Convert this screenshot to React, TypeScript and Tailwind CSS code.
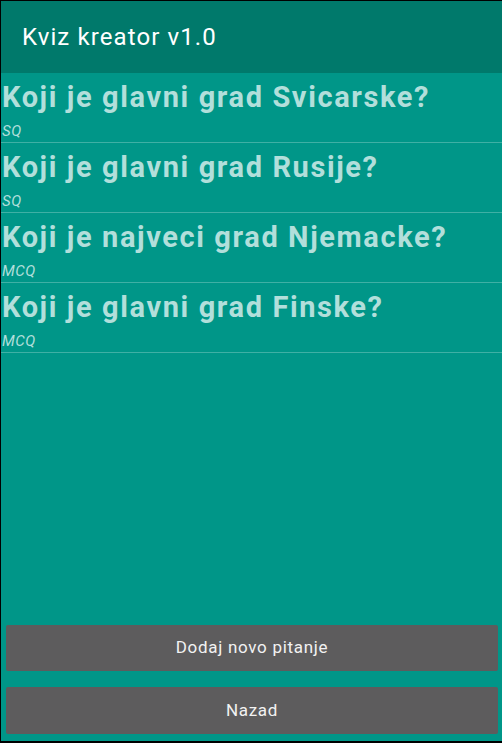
const questions = [
  { title: "Koji je glavni grad Svicarske?", type: "SQ" },
  { title: "Koji je glavni grad Rusije?", type: "SQ" },
  { title: "Koji je najveci grad Njemacke?", type: "MCQ" },
  { title: "Koji je glavni grad Finske?", type: "MCQ" },
];

export default function App() {
  return (
    <div
      className="flex h-[743px] w-[502px] flex-col border-t border-b-2 border-l border-black bg-[#009688]"
      style={{ fontFamily: "Roboto, 'Noto Sans', sans-serif" }}
    >
      <div className="flex h-[72px] shrink-0 items-center bg-[#00796b] pl-[21px]">
        <span className="text-[24px] leading-none tracking-[1.1px] text-white">Kviz kreator v1.0</span>
      </div>

      <div className="flex flex-col">
        {questions.map((q) => (
          <div key={q.title} className="flex h-[70px] flex-col border-b border-[#3fb0a5] pl-[1px]">
            <div className="pt-[8px] text-[29px] font-bold leading-[32px] tracking-[1.6px] text-[#b2dfdb]">
              {q.title}
            </div>
            <div className="mt-[9px] text-[15px] italic leading-[18px] tracking-[0.5px] text-[#b2dfdb]">
              {q.type}
            </div>
          </div>
        ))}
      </div>

      <div className="flex-1" />

      <div className="flex flex-col gap-[16px] pb-[7px] pl-[5px] pr-[4px]">
        <button className="h-[46px] rounded-[2px] bg-[#5d5c5d] text-[17px] tracking-[0.7px] text-[#f2f2f2]">
          Dodaj novo pitanje
        </button>
        <button className="h-[47px] rounded-[2px] bg-[#5d5c5d] text-[17px] tracking-[0.7px] text-[#f2f2f2]">
          Nazad
        </button>
      </div>
    </div>
  );
}
